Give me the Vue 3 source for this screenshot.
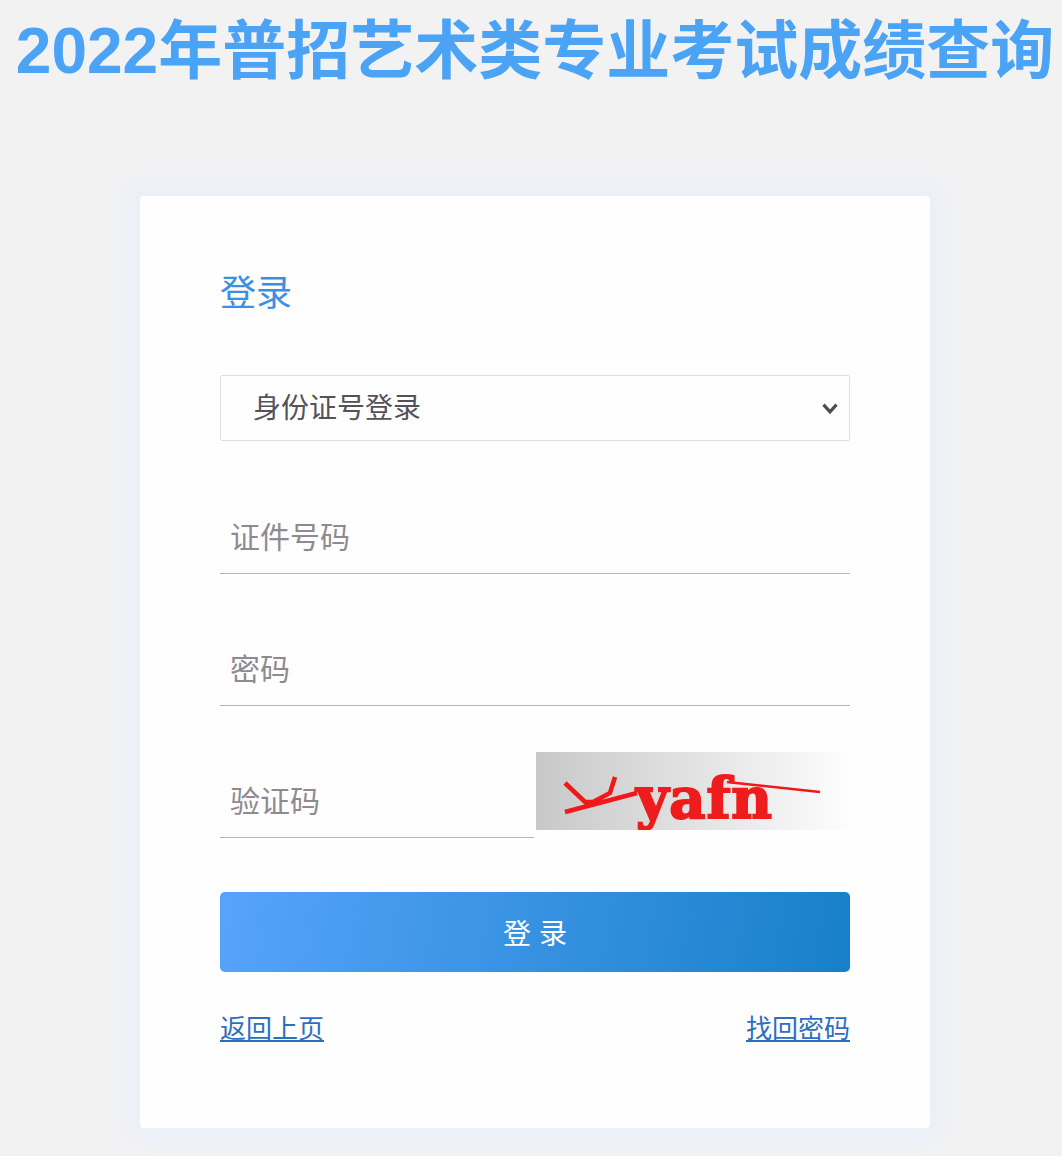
<template>
  <div class="page">
    <h1 class="page-title">2022年普招艺术类专业考试成绩查询</h1>

    <div class="login-card">
      <h2 class="login-title">登录</h2>

      <div class="select-wrap">
        <select class="login-type">
          <option>身份证号登录</option>
          <option>考生号登录</option>
        </select>
        <svg class="select-arrow" viewBox="0 0 16 12" width="18" height="13">
          <path d="M2 2.5 L8 9 L14 2.5" fill="none" stroke="#4a4f57" stroke-width="3" />
        </svg>
      </div>

      <input class="field" type="text" placeholder="证件号码" />
      <input class="field" type="password" placeholder="密码" />

      <div class="captcha-row">
        <input class="field captcha-input" type="text" placeholder="验证码" />
        <svg class="captcha" viewBox="0 0 313 78" width="313" height="78">
          <defs>
            <linearGradient id="captchaBg" x1="0" y1="0" x2="1" y2="0">
              <stop offset="0" stop-color="#c8c8c8" />
              <stop offset="0.5" stop-color="#e2e2e2" />
              <stop offset="1" stop-color="#fdfdfd" />
            </linearGradient>
          </defs>
          <rect width="313" height="78" fill="url(#captchaBg)" />
          <path d="M29 31 L49 50 L57 50 M79 25 L74 41 L57 50 M29 60 L101 41" fill="none" stroke="#f01818" stroke-width="4.5" />
          <path d="M191 30 L284 40" fill="none" stroke="#f01818" stroke-width="2.5" />
          <text class="captcha-text" x="100" y="66" textLength="136" lengthAdjust="spacing">yafn</text>
        </svg>
      </div>

      <button class="login-btn">登 录</button>

      <div class="links">
        <a href="#">返回上页</a>
        <a href="#">找回密码</a>
      </div>
    </div>
  </div>
</template>

<script setup>
</script>

<style scoped>
.page {
  display: flex;
  flex-direction: column;
  align-items: center;
  height: 1156px;
  box-sizing: border-box;
  padding-left: 8px;
  overflow: hidden;
  background: #f3f2f3;
  font-family: "Liberation Sans", "Noto Sans CJK SC", sans-serif;
}

.page-title {
  margin: 0;
  height: 196px;
  font-size: 64px;
  line-height: 102px;
  font-weight: bold;
  color: #4ba3f5;
  white-space: nowrap;
}

.login-card {
  width: 790px;
  height: 932px;
  box-sizing: border-box;
  padding: 72px 80px 0;
  background: #fefefe;
  border-radius: 4px;
  box-shadow: 0 0 24px 16px #eaf0f8;
}

.login-title {
  margin: 0 0 56px;
  font-size: 36px;
  line-height: 51px;
  font-weight: normal;
  color: #3b8fe3;
}

.select-wrap {
  position: relative;
  height: 66px;
  margin-bottom: 67px;
}

.login-type {
  width: 100%;
  height: 100%;
  padding-left: 32px;
  border: 1px solid #dfdfe1;
  border-radius: 2px;
  background: #fefeff;
  appearance: none;
  font-family: inherit;
  font-size: 28px;
  color: #55505a;
}

.select-arrow {
  position: absolute;
  right: 11px;
  top: 27px;
}

.field {
  display: block;
  width: 100%;
  height: 66px;
  box-sizing: border-box;
  margin-bottom: 66px;
  padding: 0 10px 6px;
  border: none;
  border-bottom: 1px solid #b5b3b8;
  outline: none;
  background: transparent;
  font-family: inherit;
  font-size: 30px;
  color: #555;
}

.field::placeholder {
  color: #8f8a90;
}

.captcha-row {
  display: flex;
  align-items: flex-start;
  gap: 2px;
  height: 86px;
  margin-top: -20px;
  margin-bottom: 54px;
}

.captcha-input {
  flex: none;
  width: 314px;
  height: 86px;
  margin-bottom: 0;
  padding-top: 14px;
  padding-bottom: 0;
}

.captcha {
  flex: none;
  display: block;
}

.captcha-text {
  font-family: "DejaVu Serif", serif;
  font-size: 56px;
  font-weight: bold;
  fill: #ee1c1c;
  stroke: #ee1c1c;
  stroke-width: 2px;
}

.login-btn {
  display: block;
  width: 100%;
  height: 80px;
  border: none;
  border-radius: 5px;
  background: linear-gradient(100deg, #56a3fb, #1780c8);
  font-family: inherit;
  font-size: 28px;
  color: #fff;
}

.links {
  display: flex;
  justify-content: space-between;
  margin-top: 39px;
  font-size: 26px;
  line-height: 36px;
}

.links a {
  color: #2c6ec0;
}
</style>

<style>
body {
  background: #f3f2f3;
}
</style>
